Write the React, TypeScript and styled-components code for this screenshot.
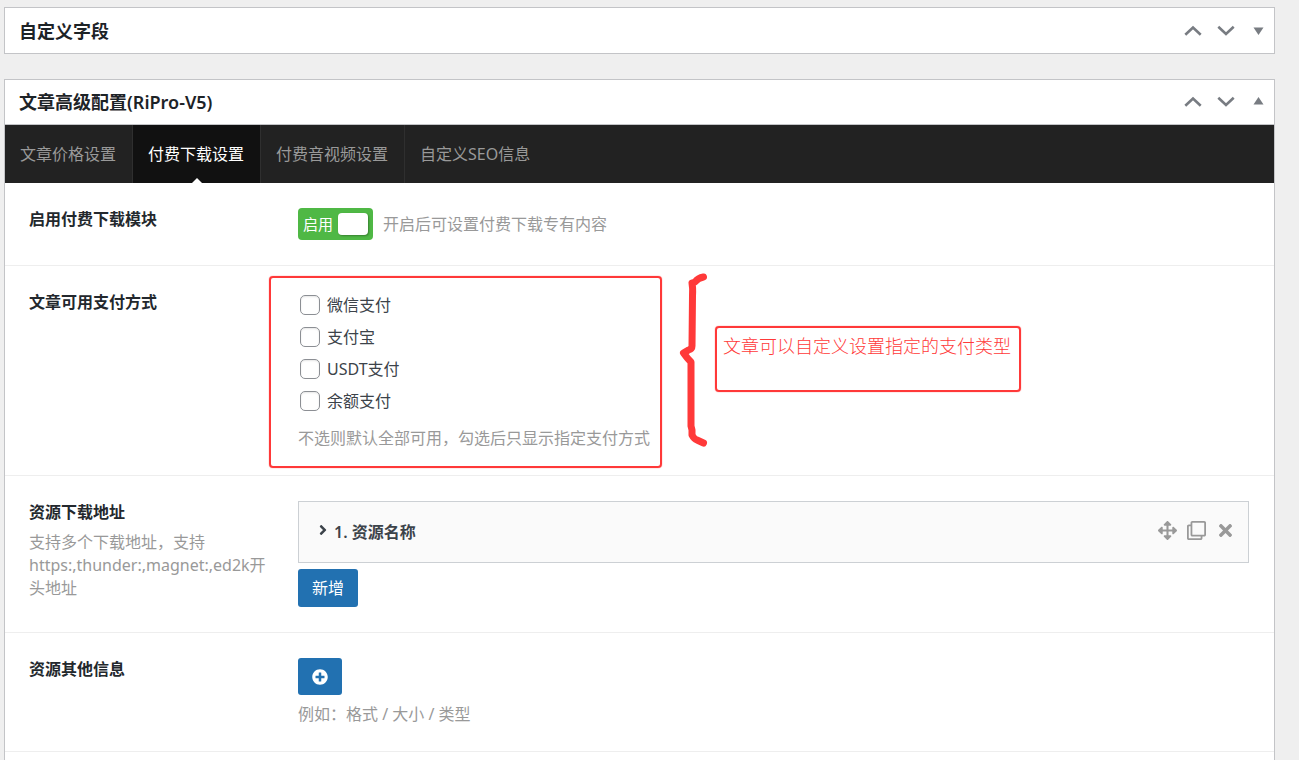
import React from "react";
import styled, { createGlobalStyle } from "styled-components";
import { FaAngleRight, FaArrowsAlt, FaPlusCircle, FaRegClone, FaTimes } from "react-icons/fa";

const GlobalStyle = createGlobalStyle`
  * { box-sizing: border-box; }
  body {
    margin: 0;
    background: #efefef;
    color: #3c434a;
    font: 16px/24px "Noto Sans", "Noto Sans CJK SC", sans-serif;
  }
  h2, h3, p, ul { margin: 0; padding: 0; }
  ul { list-style: none; }
  button, input { font: inherit; margin: 0; }
  button { border: 0; padding: 0; background: none; cursor: pointer; }
  svg { display: block; }
`;

const Page = styled.main`
  display: flex;
  flex-direction: column;
  gap: 25px;
  min-height: 100vh;
  padding: 7px 24px 0 4px;
`;

const Panel = styled.section<{ $open?: boolean }>`
  background: #fff;
  border: 1px solid #c3c4c7;
  ${(p) => p.$open && "flex: 1; border-bottom: 0;"}
`;

const PanelHeader = styled.header<{ $divided?: boolean }>`
  display: flex;
  align-items: center;
  justify-content: space-between;
  height: 45px;
  padding: 0 10px 0 14px;
  border-bottom: ${(p) => (p.$divided ? "1px solid #c3c4c7" : "0")};
`;

const PanelTitle = styled.h2`
  font-size: 18px;
  line-height: 24px;
  font-weight: 600;
  color: #1d2327;
`;

const HeaderActions = styled.div`
  display: flex;
  align-items: center;
  gap: 15px;
`;

const HeaderButton = styled.button<{ $narrow?: boolean }>`
  display: flex;
  justify-content: center;
  width: ${(p) => (p.$narrow ? "11px" : "18px")};
  margin-left: ${(p) => (p.$narrow ? "3px" : "0")};
  color: #787c82;
`;

const TabBar = styled.nav`
  display: flex;
  height: 58px;
  background: #222;
`;

const Tab = styled.a<{ $active?: boolean; $last?: boolean }>`
  position: relative;
  display: flex;
  align-items: center;
  padding: 0 16px 0 15px;
  border-right: ${(p) => (p.$last ? "0" : "1px solid #2f2f2f")};
  background: ${(p) => (p.$active ? "#111" : "transparent")};
  color: ${(p) => (p.$active ? "#fff" : "#999")};
  text-decoration: none;
  white-space: nowrap;

  &::after {
    content: "";
    display: ${(p) => (p.$active ? "block" : "none")};
    position: absolute;
    left: 50%;
    bottom: 0;
    margin-left: -5px;
    border: 5px solid transparent;
    border-top: 0;
    border-bottom-color: #fff;
  }
`;

const FieldRow = styled.div`
  display: grid;
  grid-template-columns: 20% minmax(0, 1fr);
  column-gap: 25px;
  padding: 25px 25px 25px 24px;
  border-bottom: 1px solid #eee;
`;

const FieldTitle = styled.h3`
  font-size: 16px;
  line-height: 23px;
  font-weight: 600;
  color: #23282d;
`;

const FieldSubtitle = styled.p`
  margin-top: 7px;
  line-height: 23px;
  color: #999;
  overflow-wrap: anywhere;
`;

const Description = styled.p<{ $gap: number }>`
  margin-top: ${(p) => p.$gap}px;
  color: #999;
`;

const FieldContent = styled.div`
  position: relative;
`;

const SwitchLine = styled.div`
  display: flex;
  align-items: center;
  gap: 10px;
  color: #999;
`;

const Switch = styled.label`
  display: flex;
  align-items: center;
  justify-content: space-between;
  width: 75px;
  height: 32px;
  padding: 0 5px;
  border-radius: 4px;
  background: #4fb845;
  color: #fff;
  font-size: 15px;
  cursor: pointer;
`;

const SwitchKnob = styled.input`
  appearance: none;
  width: 30px;
  height: 22px;
  border-radius: 4px;
  background: #fff;
  box-shadow: 1px 1px 2px rgba(0, 0, 0, 0.3);
`;

const OptionList = styled.ul`
  display: grid;
  gap: 4px;
`;

const Option = styled.label`
  display: flex;
  align-items: center;
  gap: 7px;
  width: fit-content;
  height: 28px;
  padding-left: 2px;
`;

const Checkbox = styled.input`
  appearance: none;
  width: 20px;
  height: 20px;
  border: 1px solid #8c8f94;
  border-radius: 5px;
  background: #fff;
  box-shadow: inset 0 1px 2px rgba(0, 0, 0, 0.1);
  &:checked { background: #2271b1; }
`;

const MARK = "#ff3939";

const MarkFrame = styled.div`
  position: absolute;
  top: -15px;
  left: -29px;
  width: 393px;
  height: 192px;
  border: 2px solid ${MARK};
  border-radius: 4px;
  box-shadow: 0 0 1px ${MARK};
  pointer-events: none;
`;

const MarkBrace = styled.svg`
  position: absolute;
  top: -19px;
  left: 380px;
`;

const MarkNote = styled.p`
  position: absolute;
  top: 35px;
  left: 417px;
  width: 306px;
  height: 66px;
  padding: 6px;
  border: 2px solid ${MARK};
  border-radius: 4px;
  box-shadow: 0 0 1px ${MARK};
  color: ${MARK};
  font-size: 18px;
  font-weight: 300;
  white-space: nowrap;
`;

const GroupItem = styled.div`
  display: flex;
  align-items: center;
  justify-content: space-between;
  height: 62px;
  padding: 0 13px 0 16px;
  border: 1px solid #ccd0d4;
  background: #fafafa;
`;

const GroupToggle = styled.button`
  display: flex;
  align-items: center;
  gap: 3px;
  font-weight: 600;
  color: #3c434a;
  svg { margin-bottom: 5px; }
`;

const GroupTools = styled.div`
  display: flex;
  align-items: center;
  gap: 10px;
  padding-bottom: 4px;
`;

const ToolButton = styled.button`
  color: #999;
`;

const PrimaryButton = styled.button<{ $icon?: boolean }>`
  display: flex;
  align-items: center;
  justify-content: center;
  width: ${(p) => (p.$icon ? "44px" : "60px")};
  height: ${(p) => (p.$icon ? "37px" : "38px")};
  margin-top: ${(p) => (p.$icon ? "0" : "6px")};
  border-radius: 3px;
  background: #2271b1;
  color: #fff;
`;

const Chevron = ({ up }: { up?: boolean }) => (
  <svg width="18" height="12" viewBox="0 0 18 12" fill="none" stroke="currentColor" strokeWidth="2.6">
    <path d={up ? "M1.3 9.8 9 2.600l7.7 7.2" : "M1.3 1.700 9 8.900l7.7-7.2"} />
  </svg>
);

const Triangle = ({ up }: { up?: boolean }) => (
  <svg width="11" height="12" viewBox="0 0 11 12" fill="currentColor">
    <path d={up ? "M.5 8.500h10L5.500 1z" : "M.5 2.500h10L5.500 10z"} />
  </svg>
);

const PanelActions = ({ open }: { open?: boolean }) => (
  <HeaderActions>
    <HeaderButton type="button" aria-label="上移"><Chevron up /></HeaderButton>
    <HeaderButton type="button" aria-label="下移"><Chevron /></HeaderButton>
    <HeaderButton type="button" $narrow aria-label="切换面板" aria-expanded={!!open}>
      <Triangle up={open} />
    </HeaderButton>
  </HeaderActions>
);

const tabs = ["文章价格设置", "付费下载设置", "付费音视频设置", "自定义SEO信息"];
const payments = ["微信支付", "支付宝", "USDT支付", "余额支付"];

export default function App() {
  return (
    <>
      <GlobalStyle />
      <Page>
        <Panel>
          <PanelHeader>
            <PanelTitle>自定义字段</PanelTitle>
            <PanelActions />
          </PanelHeader>
        </Panel>

        <Panel $open>
          <PanelHeader $divided>
            <PanelTitle>文章高级配置(RiPro-V5)</PanelTitle>
            <PanelActions open />
          </PanelHeader>

          <TabBar>
            {tabs.map((name, i) => (
              <Tab key={name} href="#" $active={i === 1} $last={i === tabs.length - 1}>
                {name}
              </Tab>
            ))}
          </TabBar>

          <FieldRow>
            <FieldTitle>启用付费下载模块</FieldTitle>
            <SwitchLine>
              <Switch>
                启用
                <SwitchKnob type="checkbox" role="switch" defaultChecked />
              </Switch>
              <span>开启后可设置付费下载专有内容</span>
            </SwitchLine>
          </FieldRow>

          <FieldRow>
            <FieldTitle>文章可用支付方式</FieldTitle>
            <FieldContent>
              <OptionList>
                {payments.map((name) => (
                  <li key={name}>
                    <Option>
                      <Checkbox type="checkbox" name="payment" value={name} />
                      {name}
                    </Option>
                  </li>
                ))}
              </OptionList>
              <Description $gap={11}>不选则默认全部可用，勾选后只显示指定支付方式</Description>
              <MarkFrame />
              <MarkBrace width="32" height="176" viewBox="0 0 32 176" fill="none" stroke={MARK} strokeWidth="7" strokeLinecap="round" strokeLinejoin="round">
                <path d="M25.500 5Q20 6 17 10L14 11Q15 16 14.500 24L14 74Q14 77 10.500 78L5.500 81Q9 86 13 90V154L14 158V163Q16 167 19 168L25.500 171" />
              </MarkBrace>
              <MarkNote>文章可以自定义设置指定的支付类型</MarkNote>
            </FieldContent>
          </FieldRow>

          <FieldRow>
            <div>
              <FieldTitle>资源下载地址</FieldTitle>
              <FieldSubtitle>支持多个下载地址，支持https:,thunder:,magnet:,ed2k开头地址</FieldSubtitle>
            </div>
            <FieldContent>
              <GroupItem>
                <GroupToggle type="button" aria-expanded={false}>
                  <FaAngleRight size={16} />
                  1. 资源名称
                </GroupToggle>
                <GroupTools>
                  <ToolButton type="button" aria-label="移动"><FaArrowsAlt size={19} /></ToolButton>
                  <ToolButton type="button" aria-label="复制"><FaRegClone size={19} /></ToolButton>
                  <ToolButton type="button" aria-label="删除"><FaTimes size={19} /></ToolButton>
                </GroupTools>
              </GroupItem>
              <PrimaryButton type="button">新增</PrimaryButton>
            </FieldContent>
          </FieldRow>

          <FieldRow>
            <FieldTitle>资源其他信息</FieldTitle>
            <FieldContent>
              <PrimaryButton type="button" $icon aria-label="添加"><FaPlusCircle size={16} /></PrimaryButton>
              <Description $gap={7}>例如：格式 / 大小 / 类型</Description>
            </FieldContent>
          </FieldRow>
        </Panel>
      </Page>
    </>
  );
}
